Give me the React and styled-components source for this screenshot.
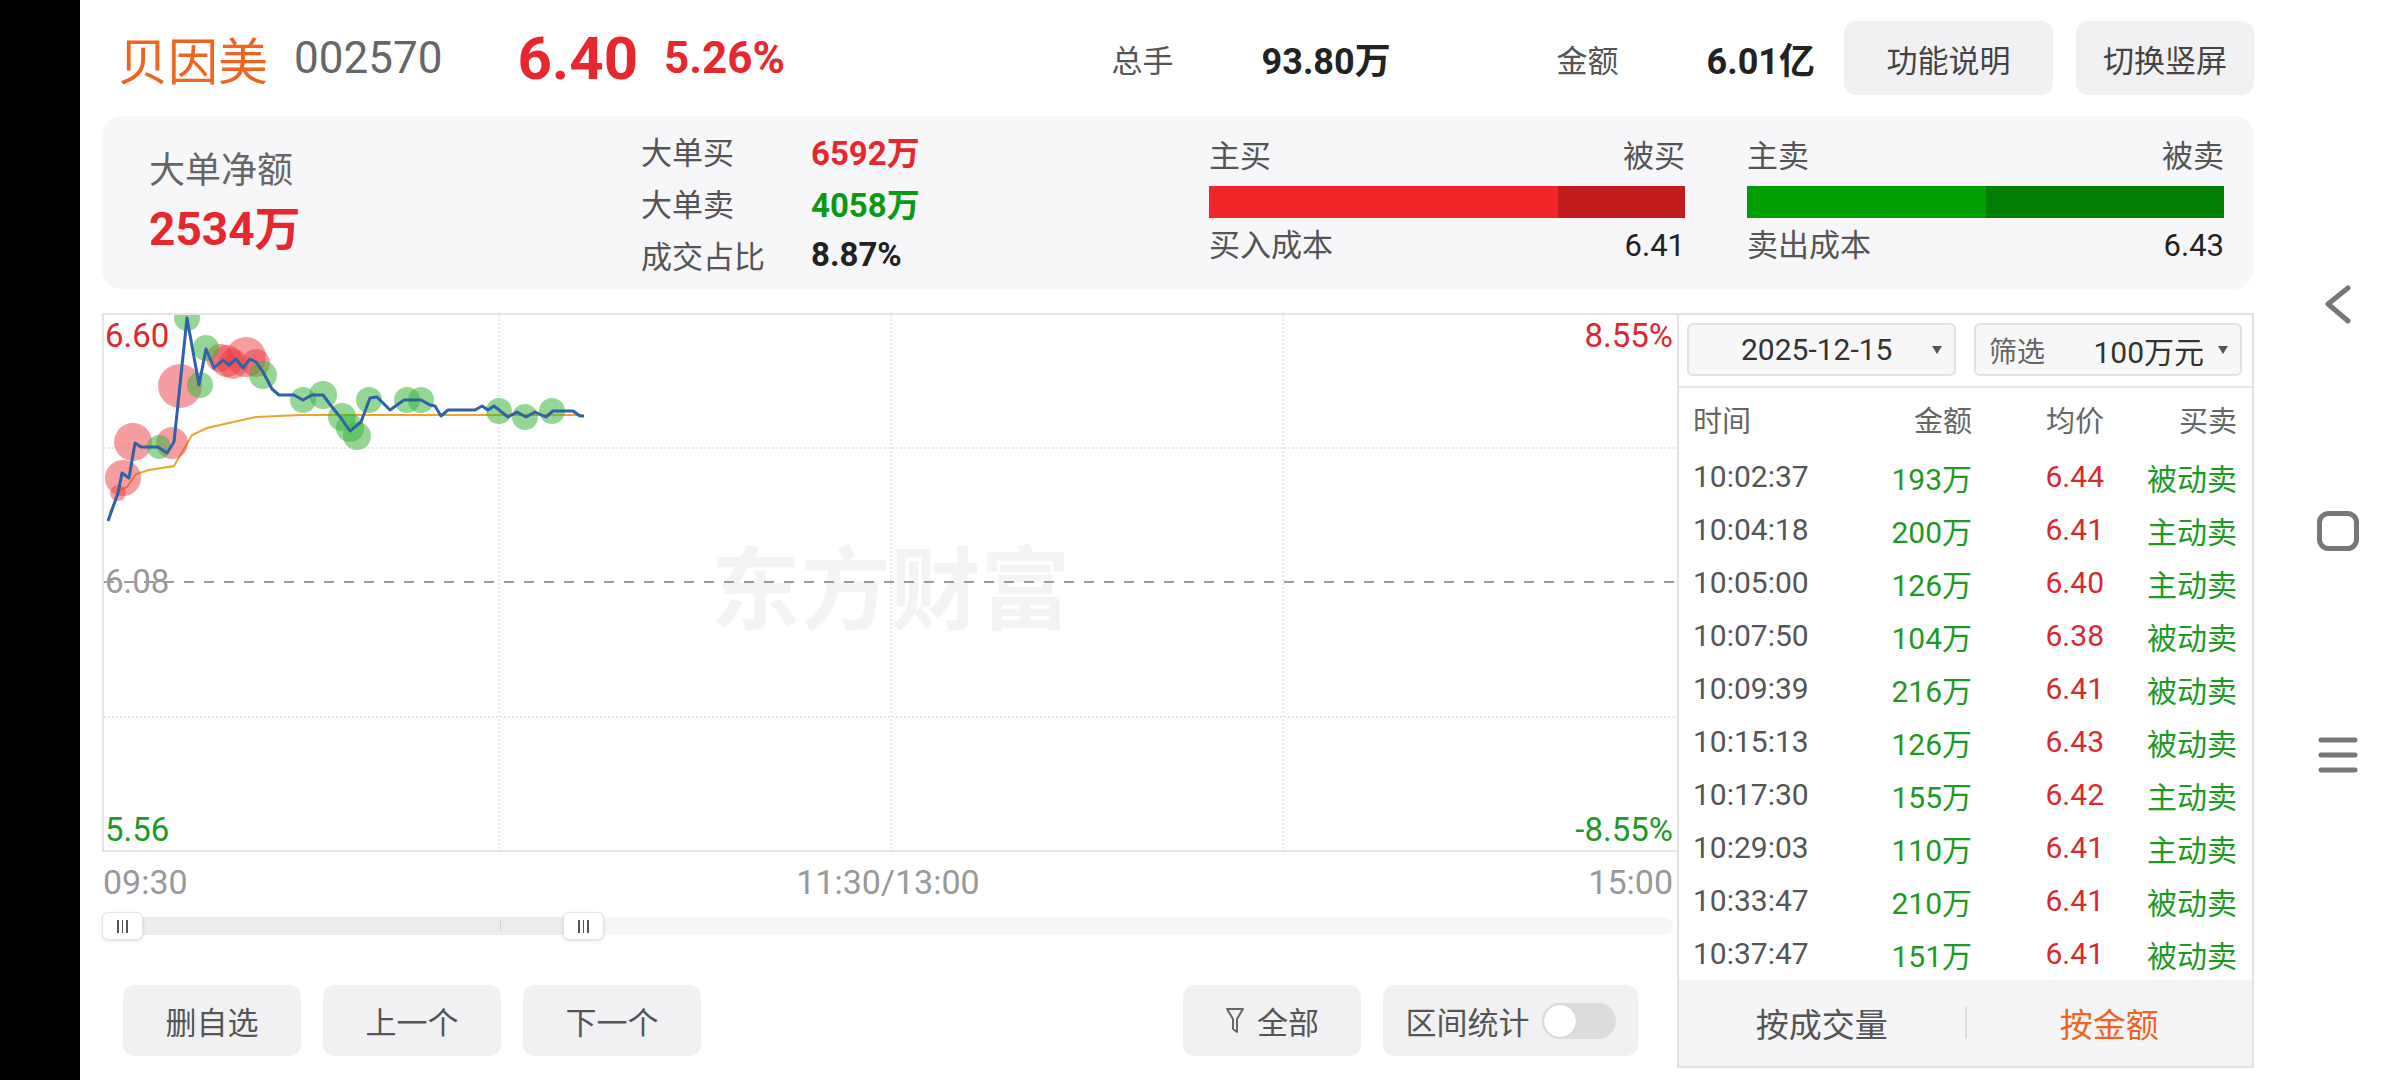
import React from 'react';
import styled, { createGlobalStyle } from 'styled-components';

const colors = {
  orange: '#ef641f',
  red: '#e6272d',
  priceRed: '#d8292f',
  green: '#0a9a12',
  rowGreen: '#1c9a24',
  text: '#222',
  label: '#555',
  muted: '#666',
  axis: '#999',
  panel: '#f7f7f9',
  button: '#f1f1f3',
  border: '#e4e4e4'
};

const trades = [
  ['10:02:37', '193万', '6.44', '被动卖'],
  ['10:04:18', '200万', '6.41', '主动卖'],
  ['10:05:00', '126万', '6.40', '主动卖'],
  ['10:07:50', '104万', '6.38', '被动卖'],
  ['10:09:39', '216万', '6.41', '被动卖'],
  ['10:15:13', '126万', '6.43', '被动卖'],
  ['10:17:30', '155万', '6.42', '主动卖'],
  ['10:29:03', '110万', '6.41', '主动卖'],
  ['10:33:47', '210万', '6.41', '被动卖'],
  ['10:37:47', '151万', '6.41', '被动卖']
];

// page coordinates, the svg viewBox is aligned with the chart inner box
const priceLine = [
  [108, 521], [118, 493], [122, 473], [129, 478], [135, 443], [141, 447], [158, 447], [167, 453],
  [174, 442], [187, 318], [199, 385], [206, 349], [214, 368], [223, 360], [229, 365], [236, 359],
  [243, 368], [250, 359], [256, 362], [263, 372], [272, 389], [279, 395], [294, 395], [303, 400],
  [312, 395], [323, 395], [332, 407], [341, 418], [350, 431], [361, 422], [370, 398], [377, 397],
  [390, 410], [404, 400], [421, 400], [430, 405], [435, 406], [441, 416], [448, 410], [475, 410],
  [482, 406], [488, 410], [494, 406], [508, 417], [517, 412], [526, 417], [535, 412], [546, 417],
  [553, 411], [573, 411], [580, 416], [584, 416]
];

const avgLine = [
  [110, 513], [120, 490], [127, 487], [136, 474], [149, 470], [174, 466], [192, 435],
  [207, 428], [229, 423], [256, 417], [301, 415], [582, 415]
];

const bubbles = [
  [118, 493, 8, 'r'], [123, 478, 18, 'r'], [133, 442, 19, 'r'], [172, 443, 16, 'r'],
  [180, 386, 22, 'r'], [220, 358, 14, 'r'], [227, 361, 16, 'r'], [233, 364, 15, 'r'],
  [246, 357, 20, 'r'], [256, 363, 14, 'r'],
  [159, 447, 12, 'g'], [187, 318, 13, 'g'], [200, 385, 13, 'g'], [206, 348, 13, 'g'],
  [263, 375, 14, 'g'], [303, 400, 13, 'g'], [323, 395, 14, 'g'], [342, 417, 14, 'g'],
  [350, 428, 14, 'g'], [357, 436, 14, 'g'], [369, 400, 13, 'g'], [407, 400, 13, 'g'],
  [421, 400, 13, 'g'], [499, 411, 13, 'g'], [525, 417, 13, 'g'], [552, 411, 13, 'g']
];

const toPoints = (pts) => pts.map(([x, y]) => `${x},${y}`).join(' ');

const GlobalStyle = createGlobalStyle`
  html, body {
    margin: 0;
    padding: 0;
    background: #fff;
  }
  body {
    font-family: Roboto, "Noto Sans CJK SC", sans-serif;
  }
  * {
    box-sizing: border-box;
  }
`;

const App = () => (
  <Screen>
    <GlobalStyle />
    <SideBar />
    <Main>
      <Header>
        <StockName>贝因美</StockName>
        <StockCode>002570</StockCode>
        <Price>6.40</Price>
        <Change>5.26%</Change>
        <Stats>
          <Stat $width={445}>
            <StatLabel>总手</StatLabel>
            <StatValue>93.80万</StatValue>
          </Stat>
          <Stat>
            <StatLabel>金额</StatLabel>
            <StatValue>6.01亿</StatValue>
          </Stat>
          <HeadButton $width={209} $gap={29}>功能说明</HeadButton>
          <HeadButton $width={178} $gap={23}>切换竖屏</HeadButton>
        </Stats>
      </Header>

      <Summary>
        <NetCol>
          <NetLabel>大单净额</NetLabel>
          <NetValue>2534万</NetValue>
        </NetCol>
        <BigCol>
          <BigRow>
            <BigLabel>大单买</BigLabel>
            <BigValue $color={colors.red}>6592万</BigValue>
          </BigRow>
          <BigRow>
            <BigLabel>大单卖</BigLabel>
            <BigValue $color={colors.green}>4058万</BigValue>
          </BigRow>
          <BigRow>
            <BigLabel>成交占比</BigLabel>
            <BigValue $color={colors.text}>8.87%</BigValue>
          </BigRow>
        </BigCol>
        <FlowBlock $width={476}>
          <FlowLabels>
            <span>主买</span>
            <span>被买</span>
          </FlowLabels>
          <Bar>
            <BarSeg $share={73.3} $bg="#f12526" />
            <BarSeg $share={26.7} $bg="#c11d1e" />
          </Bar>
          <CostRow>
            <span>买入成本</span>
            <CostValue>6.41</CostValue>
          </CostRow>
        </FlowBlock>
        <FlowBlock $width={477} $gap={62}>
          <FlowLabels>
            <span>主卖</span>
            <span>被卖</span>
          </FlowLabels>
          <Bar>
            <BarSeg $share={50.1} $bg="#00a005" />
            <BarSeg $share={49.9} $bg="#007e03" />
          </Bar>
          <CostRow>
            <span>卖出成本</span>
            <CostValue>6.43</CostValue>
          </CostRow>
        </FlowBlock>
      </Summary>

      <ChartRow>
        <LeftCol>
          <ChartBox>
            <Watermark>东方财富</Watermark>
            <AxisLabel $top={1} $left={1} $color={colors.priceRed}>6.60</AxisLabel>
            <AxisLabel $top={1} $right={4} $color={colors.priceRed}>8.55%</AxisLabel>
            <AxisLabel $top={247} $left={1} $color={colors.axis}>6.08</AxisLabel>
            <AxisLabel $top={495} $left={1} $color={colors.rowGreen}>5.56</AxisLabel>
            <AxisLabel $top={495} $right={4} $color={colors.rowGreen}>-8.55%</AxisLabel>
            <Plot viewBox="104 315 1573 535" preserveAspectRatio="none">
              <g stroke="#e2e2e2" strokeWidth="1.5" strokeDasharray="2 2">
                <line x1="499" y1="315" x2="499" y2="850" />
                <line x1="891" y1="315" x2="891" y2="850" />
                <line x1="1283" y1="315" x2="1283" y2="850" />
                <line x1="104" y1="448" x2="1677" y2="448" />
                <line x1="104" y1="717" x2="1677" y2="717" />
              </g>
              <line x1="104" y1="582" x2="1677" y2="582" stroke="#9a9a9a" strokeWidth="2" strokeDasharray="10 10" />
              <polyline points={toPoints(avgLine)} fill="none" stroke="#f0a22c" strokeWidth="2" />
              {bubbles.map(([x, y, r, kind]) => (
                <circle
                  key={`${x}-${y}`}
                  cx={x}
                  cy={y}
                  r={r}
                  fill={kind === 'r' ? 'rgba(238, 60, 64, 0.5)' : 'rgba(60, 182, 60, 0.55)'}
                />
              ))}
              <polyline points={toPoints(priceLine)} fill="none" stroke="#2d63a8" strokeWidth="3" strokeLinejoin="round" />
            </Plot>
          </ChartBox>

          <TimeAxis>
            <span>09:30</span>
            <span>11:30/13:00</span>
            <TimeEnd>15:00</TimeEnd>
          </TimeAxis>

          <Scroller>
            <Track />
            <Tick />
            <Handle $left={0}><Grip /><Grip /><Grip /></Handle>
            <Handle $left={461}><Grip /><Grip /><Grip /></Handle>
          </Scroller>

          <ButtonRow>
            <ActionButton>删自选</ActionButton>
            <ActionButton>上一个</ActionButton>
            <ActionButton>下一个</ActionButton>
            <ActionButton $push>
              <svg width="20" height="28" viewBox="0 0 20 28">
                <path d="M2 2 H18 L12 12 V25 L8 22 V12 Z" fill="none" stroke="#666" strokeWidth="2" strokeLinejoin="round" />
              </svg>
              全部
            </ActionButton>
            <ActionButton $width={255}>
              区间统计
              <Toggle><Knob /></Toggle>
            </ActionButton>
          </ButtonRow>
        </LeftCol>

        <TradeTable>
          <SelectRow>
            <Select $width={269} $padLeft={52}>
              <span>2025-12-15</span>
              <Caret />
            </Select>
            <Select $width={268} $padLeft={13}>
              <SelectHint>筛选</SelectHint>
              <SelectValue>100万元</SelectValue>
              <Caret />
            </Select>
          </SelectRow>
          <TableHead>
            <span>时间</span>
            <Cell $align="right">金额</Cell>
            <Cell $align="right">均价</Cell>
            <Cell $align="right">买卖</Cell>
          </TableHead>
          <TableBody>
            {trades.map(([time, amount, price, side]) => (
              <TableRow key={time}>
                <Cell $color="#555">{time}</Cell>
                <Cell $align="right" $color={colors.rowGreen}>{amount}</Cell>
                <Cell $align="right" $color={colors.priceRed}>{price}</Cell>
                <Cell $align="right" $color={colors.rowGreen}>{side}</Cell>
              </TableRow>
            ))}
          </TableBody>
          <TableFooter>
            <Tab $color="#555">按成交量</Tab>
            <TabDivider />
            <Tab $color={colors.orange}>按金额</Tab>
          </TableFooter>
        </TradeTable>
      </ChartRow>
    </Main>

    <NavBar>
      <svg width="28" height="40" viewBox="0 0 28 40">
        <path d="M24 3 L4 19 L24 36" fill="none" stroke="#777" strokeWidth="5" strokeLinecap="round" strokeLinejoin="round" />
      </svg>
      <svg width="42" height="40" viewBox="0 0 42 40">
        <rect x="2.5" y="2.5" width="37" height="35" rx="9" fill="none" stroke="#777" strokeWidth="5" />
      </svg>
      <svg width="40" height="36" viewBox="0 0 40 36">
        <g stroke="#777" strokeWidth="5" strokeLinecap="round">
          <line x1="3" y1="3" x2="37" y2="3" />
          <line x1="3" y1="18" x2="37" y2="18" />
          <line x1="3" y1="33" x2="37" y2="33" />
        </g>
      </svg>
    </NavBar>
  </Screen>
);

const Screen = styled.div`
    display: flex;
    width: 2400px;
    height: 1080px;
    overflow: hidden;
    background: #fff;
`;

const SideBar = styled.div`
    width: 80px;
    flex-shrink: 0;
    background: #000;
`;

const Main = styled.div`
    width: 2174px;
    flex-shrink: 0;
    padding-left: 22px;
    display: flex;
    flex-direction: column;
`;

const NavBar = styled.div`
    flex: 1;
    display: flex;
    flex-direction: column;
    align-items: center;
    gap: 186px;
    padding: 285px 0 0 22px;
`;

const Header = styled.div`
    height: 116px;
    display: flex;
    align-items: center;
    padding-left: 16px;
`;

const StockName = styled.div`
    font-size: 50px;
    color: ${colors.orange};
    font-family: "Noto Sans CJK SC", sans-serif;
`;

const StockCode = styled.div`
    margin-left: 26px;
    font-size: 44px;
    color: ${colors.muted};
`;

const Price = styled.div`
    margin-left: 75px;
    font-size: 60px;
    font-weight: 700;
    color: ${colors.red};
`;

const Change = styled.div`
    margin-left: 26px;
    font-size: 44px;
    font-weight: 700;
    color: ${colors.red};
`;

const Stats = styled.div`
    margin-left: auto;
    display: flex;
    align-items: center;
`;

const Stat = styled.div`
    display: flex;
    align-items: center;
    width: ${({$width}) => ($width ? `${$width}px` : 'auto')};
`;

const StatLabel = styled.span`
    width: 150px;
    font-size: 31px;
    color: ${colors.label};
`;

const StatValue = styled.span`
    font-size: 36px;
    font-weight: 700;
    color: ${colors.text};
`;

const HeadButton = styled.div`
    width: ${({$width}) => $width}px;
    margin-left: ${({$gap}) => $gap}px;
    height: 74px;
    border-radius: 12px;
    background: ${colors.button};
    display: flex;
    align-items: center;
    justify-content: center;
    font-size: 31px;
    color: #444;
`;

const Summary = styled.div`
    height: 173px;
    background: ${colors.panel};
    border-radius: 20px;
    display: flex;
    align-items: center;
    padding: 0 30px 0 47px;
`;

const NetCol = styled.div`
    width: 492px;
    display: flex;
    flex-direction: column;
`;

const NetLabel = styled.div`
    font-size: 36px;
    line-height: 44px;
    color: ${colors.muted};
`;

const NetValue = styled.div`
    margin-top: 8px;
    font-size: 46px;
    line-height: 56px;
    font-weight: 700;
    color: ${colors.red};
`;

const BigCol = styled.div`
    width: 568px;
    display: flex;
    flex-direction: column;
`;

const BigRow = styled.div`
    height: 52px;
    display: flex;
    align-items: center;
`;

const BigLabel = styled.span`
    width: 170px;
    font-size: 31px;
    color: ${colors.label};
`;

const BigValue = styled.span`
    font-size: 33px;
    font-weight: 700;
    color: ${({$color}) => $color};
`;

const FlowBlock = styled.div`
    width: ${({$width}) => $width}px;
    margin-left: ${({$gap}) => $gap || 0}px;
    align-self: stretch;
    padding-top: 22px;
`;

const FlowLabels = styled.div`
    display: flex;
    justify-content: space-between;
    line-height: 38px;
    font-size: 31px;
    color: ${colors.label};
`;

const Bar = styled.div`
    margin-top: 10px;
    height: 32px;
    display: flex;
`;

const BarSeg = styled.div`
    width: ${({$share}) => $share}%;
    background: ${({$bg}) => $bg};
`;

const CostRow = styled.div`
    margin-top: 6px;
    display: flex;
    justify-content: space-between;
    line-height: 44px;
    font-size: 31px;
    color: ${colors.label};
`;

const CostValue = styled.span`
    color: ${colors.text};
`;

const ChartRow = styled.div`
    margin-top: 24px;
    height: 755px;
    display: flex;
`;

const LeftCol = styled.div`
    width: 1575px;
    display: flex;
    flex-direction: column;
`;

const ChartBox = styled.div`
    position: relative;
    height: 539px;
    border: 2px solid ${colors.border};
    border-right: none;
    overflow: hidden;
`;

const Watermark = styled.div`
    position: absolute;
    left: 50%;
    top: 50%;
    transform: translate(-50%, -50%);
    font-family: "Noto Sans CJK SC", sans-serif;
    font-size: 90px;
    font-weight: 700;
    color: #f4f4f4;
    white-space: nowrap;
`;

const AxisLabel = styled.div`
    position: absolute;
    top: ${({$top}) => $top}px;
    ${({$left}) => ($left !== undefined ? `left: ${$left}px;` : '')}
    ${({$right}) => ($right !== undefined ? `right: ${$right}px;` : '')}
    font-size: 33px;
    line-height: 40px;
    color: ${({$color}) => $color};
`;

const Plot = styled.svg`
    position: absolute;
    inset: 0;
    width: 100%;
    height: 100%;
`;

const TimeAxis = styled.div`
    height: 56px;
    display: grid;
    grid-template-columns: 1fr auto 1fr;
    align-items: center;
    padding: 4px 4px 0 1px;
    font-size: 34px;
    color: ${colors.axis};
`;

const TimeEnd = styled.span`
    justify-self: end;
`;

const Scroller = styled.div`
    position: relative;
    width: 1571px;
    height: 28px;
    margin-top: 4px;
    padding-top: 5px;
`;

const Track = styled.div`
    height: 18px;
    border-radius: 9px;
    background: linear-gradient(to right, #ececee 0 482px, #f6f6f8 482px);
`;

const Tick = styled.div`
    position: absolute;
    left: 398px;
    top: 9px;
    width: 1px;
    height: 10px;
    background: #cfcfcf;
`;

const Handle = styled.div`
    position: absolute;
    top: 0;
    left: ${({$left}) => $left}px;
    width: 41px;
    height: 28px;
    border-radius: 6px;
    background: #fff;
    border: 1px solid #e3e3e3;
    box-shadow: 0 1px 3px rgba(0, 0, 0, 0.12);
    display: flex;
    align-items: center;
    justify-content: center;
    gap: 3px;
`;

const Grip = styled.div`
    width: 1.5px;
    height: 13px;
    background: #555;
`;

const ButtonRow = styled.div`
    margin-top: 45px;
    display: flex;
    gap: 22px;
    padding: 0 39px 0 21px;
`;

const ActionButton = styled.div`
    width: ${({$width}) => $width || 178}px;
    height: 71px;
    margin-left: ${({$push}) => ($push ? 'auto' : '0')};
    border-radius: 12px;
    background: ${colors.button};
    display: flex;
    align-items: center;
    justify-content: center;
    gap: 12px;
    font-size: 31px;
    color: #555;
`;

const Toggle = styled.div`
    width: 74px;
    height: 36px;
    border-radius: 18px;
    background: #dcdcde;
    padding: 2px;
    display: flex;
`;

const Knob = styled.div`
    width: 32px;
    height: 32px;
    border-radius: 50%;
    background: #fff;
    box-shadow: 0 0 1px rgba(0, 0, 0, 0.2);
`;

const TradeTable = styled.div`
    width: 577px;
    height: 755px;
    border: 2px solid #e2e2e2;
    display: flex;
    flex-direction: column;
`;

const SelectRow = styled.div`
    display: flex;
    gap: 18px;
    padding: 8px 10px 10px 8px;
    border-bottom: 2px solid #e6e6e6;
`;

const Select = styled.div`
    width: ${({$width}) => $width}px;
    height: 53px;
    border: 2px solid #e2e2e2;
    border-radius: 6px;
    background: #f7f7f8;
    display: flex;
    align-items: center;
    justify-content: space-between;
    padding: 0 12px 0 ${({$padLeft}) => $padLeft}px;
    font-size: 30px;
    color: #333;
`;

const SelectHint = styled.span`
    font-size: 28px;
    color: ${colors.muted};
`;

const SelectValue = styled.span`
    margin-left: auto;
    margin-right: 14px;
`;

const Caret = styled.span`
    width: 0;
    height: 0;
    border-left: 5px solid transparent;
    border-right: 5px solid transparent;
    border-top: 8px solid #555;
`;

const TableHead = styled.div`
    height: 62px;
    display: grid;
    grid-template-columns: 180px 99px 132px 133px;
    align-items: center;
    padding: 0 15px 0 14px;
    font-size: 29px;
    color: ${colors.muted};
`;

const TableBody = styled.div`
    display: flex;
    flex-direction: column;
`;

const TableRow = styled.div`
    height: 53px;
    display: grid;
    grid-template-columns: 180px 99px 132px 133px;
    align-items: center;
    padding: 0 15px 0 14px;
    font-size: 30px;
`;

const Cell = styled.span`
    text-align: ${({$align}) => $align || 'left'};
    color: ${({$color}) => $color || 'inherit'};
    white-space: nowrap;
`;

const TableFooter = styled.div`
    flex: 1;
    background: #f5f5f7;
    display: flex;
    align-items: center;
`;

const Tab = styled.div`
    flex: 1;
    text-align: center;
    font-size: 33px;
    color: ${({$color}) => $color};
`;

const TabDivider = styled.div`
    width: 2px;
    height: 32px;
    background: #dedede;
`;

export default App;
